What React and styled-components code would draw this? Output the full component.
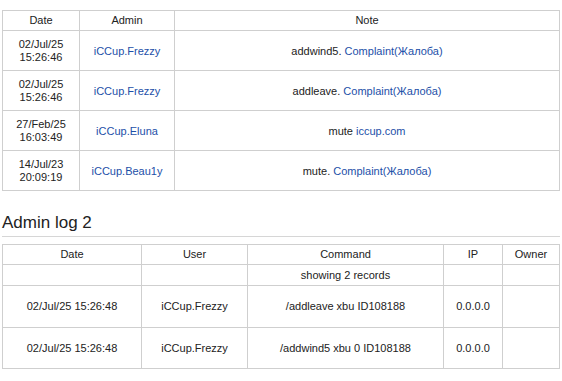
import styled, { createGlobalStyle } from "styled-components";

const GlobalStyle = createGlobalStyle`
  body {
    margin: 0;
    background: #fff;
    font-family: "Liberation Sans", Arial, sans-serif;
    color: #222;
  }
`;

const noteLog = [
  { date: "02/Jul/25", time: "15:26:46", admin: "iCCup.Frezzy", text: "addwind5.", link: "Complaint(Жалоба)" },
  { date: "02/Jul/25", time: "15:26:46", admin: "iCCup.Frezzy", text: "addleave.", link: "Complaint(Жалоба)" },
  { date: "27/Feb/25", time: "16:03:49", admin: "iCCup.Eluna", text: "mute", link: "iccup.com" },
  { date: "14/Jul/23", time: "20:09:19", admin: "iCCup.Beau1y", text: "mute.", link: "Complaint(Жалоба)" },
];

const commandLog = [
  { date: "02/Jul/25 15:26:48", user: "iCCup.Frezzy", command: "/addleave xbu ID108188", ip: "0.0.0.0" },
  { date: "02/Jul/25 15:26:48", user: "iCCup.Frezzy", command: "/addwind5 xbu 0 ID108188", ip: "0.0.0.0" },
];

const App = () => (
  <Page>
    <GlobalStyle />
    <LogTable>
      <colgroup>
        <col style={{ width: 77 }} />
        <col style={{ width: 95 }} />
        <col />
      </colgroup>
      <thead>
        <tr>
          <Th>Date</Th>
          <Th>Admin</Th>
          <Th>Note</Th>
        </tr>
      </thead>
      <tbody>
        {noteLog.map((row, i) => (
          <tr key={i}>
            <Td $tall>
              {row.date}
              <br />
              {row.time}
            </Td>
            <Td $tall>
              <Link href="#">{row.admin}</Link>
            </Td>
            <Td $tall>
              {row.text} <Link href="#">{row.link}</Link>
            </Td>
          </tr>
        ))}
      </tbody>
    </LogTable>

    <SectionTitle>Admin log 2</SectionTitle>

    <LogTable>
      <colgroup>
        <col style={{ width: 139 }} />
        <col style={{ width: 106 }} />
        <col style={{ width: 196 }} />
        <col style={{ width: 59 }} />
        <col />
      </colgroup>
      <thead>
        <tr>
          <Th>Date</Th>
          <Th>User</Th>
          <Th>Command</Th>
          <Th>IP</Th>
          <Th>Owner</Th>
        </tr>
      </thead>
      <tbody>
        <tr>
          <Td $info />
          <Td $info />
          <Td $info>showing 2 records</Td>
          <Td $info />
          <Td $info />
        </tr>
        {commandLog.map((row, i) => (
          <tr key={i}>
            <Td $wide>{row.date}</Td>
            <Td $wide>{row.user}</Td>
            <Td $wide>{row.command}</Td>
            <Td $wide>{row.ip}</Td>
            <Td $wide />
          </tr>
        ))}
      </tbody>
    </LogTable>
  </Page>
);

export default App;

const Page = styled.div`
  padding: 10px 2px 0;
`;

const LogTable = styled.table`
  width: 100%;
  border-collapse: collapse;
  table-layout: fixed;
  border: 1px solid #cfcfcf;
  font-size: 11px;
  line-height: 13px;
`;

const Th = styled.th`
  border: 1px solid #cfcfcf;
  padding: 3px 2px;
  font-weight: normal;
  text-align: center;
  color: #222;
`;

const Td = styled.td`
  border: 1px solid #cfcfcf;
  text-align: center;
  vertical-align: middle;
  padding: ${({ $tall, $wide, $info }) =>
    $tall ? "7px 2px 6px" : $wide ? "14px 2px 13.5px" : $info ? "4px 2px 3px" : "3px 2px"};
  height: ${({ $info }) => ($info ? "13px" : "auto")};
  color: #222;
`;

const Link = styled.a`
  color: #1d4fa8;
  text-decoration: none;
`;

const SectionTitle = styled.h2`
  margin: 22px 0 7px;
  padding-bottom: 3px;
  border-bottom: 1px solid #d6d6d6;
  font-size: 17px;
  line-height: 20px;
  font-weight: normal;
  color: #222;
`;
